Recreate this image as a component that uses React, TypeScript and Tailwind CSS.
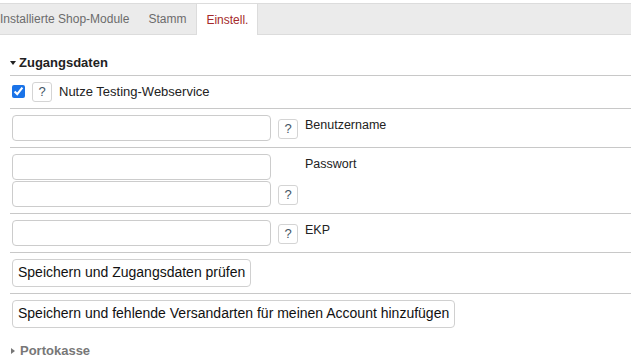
import { useState } from "react";

const HELP_BTN =
  "flex h-5 w-5 items-center justify-center rounded-[3px] border border-[#d4d4d4] bg-white text-[13px] leading-none text-[#445566]";

function HelpButton() {
  return (
    <button type="button" className={HELP_BTN}>
      ?
    </button>
  );
}

function TextInput() {
  return (
    <input
      type="text"
      className="h-[26px] w-[259px] rounded-[4px] border border-[#cccccc] bg-white px-1 outline-none"
    />
  );
}

function Tabs() {
  const tabs = ["Installierte Shop-Module", "Stamm", "Einstell."];
  return (
    <div className="mt-[3px] flex h-[32px] border-y border-[#dcdcdc] bg-[#ebebeb] text-[12px]">
      {tabs.map((t, i) => {
        const active = i === tabs.length - 1;
        return (
          <div
            key={t}
            className={
              active
                ? "-mb-px flex items-center border-x border-[#dcdcdc] bg-white px-[9px] text-[#a52a2a]"
                : i === 0
                  ? "flex items-center pr-[9px] pl-0 text-[#6b6b6b]"
                  : "flex items-center px-[10px] text-[#6b6b6b]"
            }
          >
            {t}
          </div>
        );
      })}
    </div>
  );
}

function Row({ children }: { children: React.ReactNode }) {
  return <div className="ml-[10px] border-b border-[#c8c8c8]">{children}</div>;
}

const BIG_BTN =
  "h-[28px] rounded-[4px] border border-[#d0d0d0] bg-white px-[5px] text-[14px] text-[#111]";

export default function App() {
  const [testing, setTesting] = useState(true);

  return (
    <div className="h-[357px] w-[631px] overflow-hidden bg-white font-['Liberation_Sans',Arial,sans-serif] text-[13px] text-[#222]">
      <Tabs />

      <div className="mt-[18px] flex items-center gap-[3px] pl-[10px] text-[13px] font-bold text-[#222]">
        <span className="h-0 w-0 border-x-[3.5px] border-t-[4px] border-x-transparent border-t-[#222]" />
        <span>Zugangsdaten</span>
      </div>

      <div className="mt-[2px] ml-[10px] border-t border-[#c8c8c8]" />

      <Row>
        <div className="flex h-[32px] items-center gap-[7px] pl-[2px]">
          <input
            type="checkbox"
            checked={testing}
            onChange={(e) => setTesting(e.target.checked)}
            className="h-[13px] w-[13px] accent-[#1a73e8]"
          />
          <HelpButton />
          <span>Nutze Testing-Webservice</span>
        </div>
      </Row>

      <Row>
        <div className="flex gap-[7px] py-[6px] pl-[2px]">
          <TextInput />
          <div className="mt-[4px]">
            <HelpButton />
          </div>
          <span className="mt-[1px] text-[12.5px]">Benutzername</span>
        </div>
      </Row>

      <Row>
        <div className="flex gap-[7px] py-[6px] pl-[2px]">
          <div className="flex flex-col gap-[1px]">
            <TextInput />
            <TextInput />
          </div>
          <div className="mt-[31px] w-5 shrink-0">
            <HelpButton />
          </div>
          <span className="mt-[1px] text-[12.5px]">Passwort</span>
        </div>
      </Row>

      <Row>
        <div className="flex gap-[7px] py-[6px] pl-[2px]">
          <TextInput />
          <div className="mt-[4px]">
            <HelpButton />
          </div>
          <span className="mt-[1px] text-[12.5px]">EKP</span>
        </div>
      </Row>

      <Row>
        <div className="py-[6px] pl-[2px]">
          <button type="button" className={BIG_BTN}>
            Speichern und Zugangsdaten prüfen
          </button>
        </div>
      </Row>

      <div className="ml-[10px] py-[6px] pl-[2px]">
        <button type="button" className={BIG_BTN}>
          Speichern und fehlende Versandarten für meinen Account hinzufügen
        </button>
      </div>

      <div className="mt-[9px] flex items-center gap-[5px] pl-[11px] text-[13px] leading-[16px] font-bold text-[#777]">
        <span className="h-0 w-0 border-y-[3.5px] border-l-[4px] border-y-transparent border-l-[#777]" />
        <span>Portokasse</span>
      </div>
    </div>
  );
}
